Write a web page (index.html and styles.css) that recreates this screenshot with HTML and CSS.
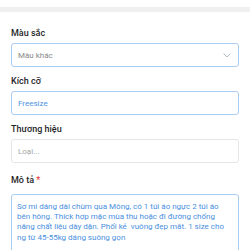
FILE: index.html
```html
<!DOCTYPE html>
<html lang="vi">
<head>
<meta charset="utf-8">
<link rel="stylesheet" href="styles.css">
</head>
<body>
<div class="top"></div>
<div class="divider"></div>
<form class="form">
  <div class="field">
    <div class="label">Màu sắc</div>
    <div class="box box-active select">
      <span class="placeholder">Màu khác</span>
      <svg class="chev" width="8" height="5" viewBox="0 0 8 5"><path d="M0.8 0.8 L4 4 L7.2 0.8" fill="none" stroke="#a9b4c2" stroke-width="0.9" stroke-linecap="round" stroke-linejoin="round"/></svg>
    </div>
  </div>
  <div class="field">
    <div class="label">Kích cỡ</div>
    <div class="box box-active"><span class="value">Freesize</span></div>
  </div>
  <div class="field">
    <div class="label">Thương hiệu</div>
    <div class="box"><span class="placeholder light">Loại...</span></div>
  </div>
  <div class="field field-desc">
    <div class="label">Mô tả <span class="req">*</span></div>
    <div class="box box-active area">Sơ mi dáng dài chùm qua Mông, có 1 túi áo ngực 2 túi áo bên hông. Thick hợp mặc mùa thu hoặc đi đường chống nắng chất liệu dày dặn. Phối kẻ &nbsp;vuông đẹp mắt. 1 size cho ng từ 45-55kg dáng suông gọn</div>
  </div>
</form>
</body>
</html>
```
FILE: styles.css
```css
html, body {
  margin: 0;
  padding: 0;
  background: #ffffff;
  overflow: hidden;
}
body {
  font-family: Roboto, "Noto Sans", Arial, sans-serif;
  width: 250px;
  height: 250px;
}
.top {
  height: 7px;
  background: #ffffff;
}
.divider {
  height: 5px;
  background: #f0f0f0;
}
.form {
  display: flex;
  flex-direction: column;
  gap: 8px;
  padding: 15px 11px 0 11px;
}
.field {
  display: flex;
  flex-direction: column;
  gap: 4px;
}
.label {
  font-size: 9px;
  line-height: 12px;
  font-weight: 500;
  color: #1f1f1f;
}
.req {
  color: #e53935;
}
.box {
  box-sizing: border-box;
  height: 24px;
  border: 1px solid #e6e6e6;
  border-radius: 3px;
  display: flex;
  align-items: center;
  padding: 0 6px;
  font-size: 8px;
}
.box-active {
  border-color: #a9cdf3;
}
.select {
  justify-content: space-between;
  padding-right: 7px;
}
.placeholder {
  color: #8a8a8a;
}
.placeholder.light {
  color: #a6a6a6;
}
.value {
  color: #4f95e3;
}
.field-desc {
  margin-top: 3px;
  gap: 8px;
}
.area {
  height: 80px;
  display: block;
  padding: 7px 5px;
  color: #4a8fe0;
  font-size: 8px;
  line-height: 10.2px;
}
.chev {
  display: block;
}
```
